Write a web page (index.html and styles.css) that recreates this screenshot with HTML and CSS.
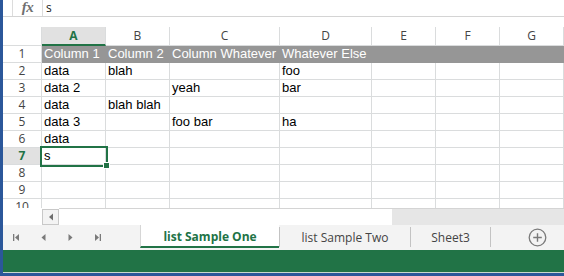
FILE: index.html
```html
<!DOCTYPE html>
<html>
<head>
<meta charset="utf-8">
<link rel="stylesheet" href="styles.css">
</head>
<body>
<div class="window">
  <div class="formula">
    <div class="fx-gap"></div>
    <div class="fx"><i>fx</i></div>
    <div class="finput">s</div>
  </div>
  <div class="spacer"></div>
  <div class="grid">
    <div class="corner"></div>
    <div class="ch sel">A</div>
    <div class="ch">B</div>
    <div class="ch">C</div>
    <div class="ch">D</div>
    <div class="ch">E</div>
    <div class="ch">F</div>
    <div class="ch">G</div>

    <div class="rh">1</div>
    <div class="c hd">Column 1</div>
    <div class="c hd">Column 2</div>
    <div class="c hd">Column Whatever</div>
    <div class="c hd">Whatever Else</div>
    <div class="c hd"></div>
    <div class="c hd"></div>
    <div class="c hd"></div>

    <div class="rh">2</div>
    <div class="c">data</div>
    <div class="c">blah</div>
    <div class="c"></div>
    <div class="c">foo</div>
    <div class="c"></div>
    <div class="c"></div>
    <div class="c"></div>

    <div class="rh">3</div>
    <div class="c">data 2</div>
    <div class="c"></div>
    <div class="c">yeah</div>
    <div class="c">bar</div>
    <div class="c"></div>
    <div class="c"></div>
    <div class="c"></div>

    <div class="rh">4</div>
    <div class="c">data</div>
    <div class="c">blah blah</div>
    <div class="c"></div>
    <div class="c"></div>
    <div class="c"></div>
    <div class="c"></div>
    <div class="c"></div>

    <div class="rh">5</div>
    <div class="c">data 3</div>
    <div class="c"></div>
    <div class="c">foo bar</div>
    <div class="c">ha</div>
    <div class="c"></div>
    <div class="c"></div>
    <div class="c"></div>

    <div class="rh">6</div>
    <div class="c">data</div>
    <div class="c"></div>
    <div class="c"></div>
    <div class="c"></div>
    <div class="c"></div>
    <div class="c"></div>
    <div class="c"></div>

    <div class="rh sel">7</div>
    <div class="c cur">s</div>
    <div class="c"></div>
    <div class="c"></div>
    <div class="c"></div>
    <div class="c"></div>
    <div class="c"></div>
    <div class="c"></div>

    <div class="rh">8</div>
    <div class="c"></div>
    <div class="c"></div>
    <div class="c"></div>
    <div class="c"></div>
    <div class="c"></div>
    <div class="c"></div>
    <div class="c"></div>

    <div class="rh">9</div>
    <div class="c"></div>
    <div class="c"></div>
    <div class="c"></div>
    <div class="c"></div>
    <div class="c"></div>
    <div class="c"></div>
    <div class="c"></div>

    <div class="rh last">10</div>
    <div class="c last"></div>
    <div class="c last"></div>
    <div class="c last"></div>
    <div class="c last"></div>
    <div class="c last"></div>
    <div class="c last"></div>
    <div class="c last"></div>
  </div>
  <div class="hscroll">
    <div class="hs-left"></div>
    <div class="hs-arrow"><svg width="6" height="8" viewBox="0 0 6 8"><path d="M5 0.5 L1 4 L5 7.5 Z" fill="#6d6d6d"/></svg></div>
    <div class="hs-thumb"></div>
    <div class="hs-track"></div>
  </div>
  <div class="tabs">
    <div class="nav">
      <div class="nbtn"><svg width="7" height="7" viewBox="0 0 7 7"><rect x="0" y="0" width="1.3" height="7" fill="#7a7a7a"/><path d="M6 0 L2 3.5 L6 7 Z" fill="#7a7a7a"/></svg></div>
      <div class="nbtn"><svg width="5" height="7" viewBox="0 0 5 7"><path d="M4.5 0 L0.5 3.5 L4.5 7 Z" fill="#7a7a7a"/></svg></div>
      <div class="nbtn"><svg width="5" height="7" viewBox="0 0 5 7"><path d="M0.5 0 L4.5 3.5 L0.5 7 Z" fill="#7a7a7a"/></svg></div>
      <div class="nbtn"><svg width="7" height="7" viewBox="0 0 7 7"><path d="M1 0 L5 3.5 L1 7 Z" fill="#7a7a7a"/><rect x="5.7" y="0" width="1.3" height="7" fill="#7a7a7a"/></svg></div>
    </div>
    <div class="tab active">list Sample One</div>
    <div class="sep"></div>
    <div class="tab t2">list Sample Two</div>
    <div class="sep"></div>
    <div class="tab t3">Sheet3</div>
    <div class="sep"></div>
    <div class="addwrap">
      <svg class="add" width="19" height="19" viewBox="0 0 19 19"><circle cx="9.5" cy="9.5" r="8.3" fill="none" stroke="#7a7a7a" stroke-width="1.3"/><path d="M9.5 5.2 V13.8 M5.2 9.5 H13.8" stroke="#7a7a7a" stroke-width="1.4"/></svg>
    </div>
  </div>
  <div class="status"></div>
</div>
</body>
</html>
```

FILE: styles.css
```css
html, body {
  margin: 0;
  padding: 0;
}
body {
  width: 564px;
  height: 276px;
  overflow: hidden;
  background: #ffffff;
  font-family: "Liberation Sans", Arial, sans-serif;
}
.window {
  width: 564px;
  height: 276px;
  box-sizing: border-box;
  border-left: 3px solid #2b579a;
  border-bottom: 3px solid #2b579a;
  display: flex;
  flex-direction: column;
  overflow: hidden;
}
.formula {
  display: flex;
  height: 17px;
  flex: none;
  box-sizing: border-box;
  border-bottom: 1px solid #d4d4d4;
}
.fx-gap {
  width: 9px;
}
.fx {
  width: 31px;
  box-sizing: border-box;
  border-left: 1px solid #dcdcdc;
  border-right: 1px solid #dcdcdc;
  text-align: center;
  font-family: "Liberation Serif", "Times New Roman", serif;
  font-size: 15px;
  font-weight: 700;
  line-height: 15px;
  color: #707070;
}
.fx i {
  letter-spacing: -0.5px;
}
.finput {
  flex: 1;
  padding-left: 3px;
  font-family: "Open Sans", "Noto Sans", sans-serif;
  font-size: 12px;
  line-height: 15px;
  color: #222;
}
.spacer {
  height: 10px;
  flex: none;
}
.grid {
  flex: none;
  display: grid;
  grid-template-columns: 39px 64px 64px 110px 92px 64px 64px 64px;
  grid-template-rows: 19px repeat(9, 17px) 9px;
  overflow: hidden;
}
.grid > div {
  box-sizing: border-box;
  border-right: 1px solid #dadcdd;
  border-bottom: 1px solid #dadcdd;
  white-space: nowrap;
}
.corner {
  background: #fff;
}
.ch {
  font-family: "Open Sans", "Noto Sans", sans-serif;
  font-size: 12px;
  line-height: 18px;
  text-align: center;
  color: #444;
  background: #fff;
}
.ch.sel {
  background: #e1e1e1;
  color: #217346;
  font-weight: 700;
  border-bottom: 2px solid #217346;
  line-height: 17px;
}
.rh {
  font-family: "Open Sans", "Noto Sans", sans-serif;
  font-size: 12px;
  line-height: 16px;
  text-align: center;
  color: #444;
  background: #fff;
  overflow: hidden;
}
.rh.sel {
  background: #e1e1e1;
  color: #217346;
  font-weight: 700;
}
.c {
  font-size: 13px;
  line-height: 16px;
  padding: 0 2px;
  color: #000;
}
.c.hd {
  background: #969696;
  color: #fff;
  border-right-color: #969696;
  border-bottom-color: #969696;
}
.grid > .last {
  border-bottom: none;
}
.c.cur {
  position: relative;
  z-index: 2;
  outline: 2px solid #217346;
  outline-offset: 0;
}
.c.cur::after {
  content: "";
  position: absolute;
  right: -5px;
  bottom: -5px;
  width: 5px;
  height: 5px;
  background: #217346;
  border: 1px solid #fff;
}
.hscroll {
  flex: none;
  height: 17px;
  display: flex;
  box-sizing: border-box;
}
.hs-left {
  width: 39px;
  background: #fff;
}
.hs-arrow {
  width: 17px;
  box-sizing: border-box;
  margin-top: 1px;
  background: #f3f3f3;
  border: 1px solid #c8c8c8;
  display: flex;
  align-items: center;
  justify-content: center;
}
.hs-thumb {
  width: 333px;
  background: #fff;
  border-top: 1px solid #d4d4d4;
}
.hs-track {
  flex: 1;
  background: #e6e6e6;
  border-top: 1px solid #d4d4d4;
}
.tabs {
  flex: none;
  height: 25px;
  display: flex;
  align-items: stretch;
  background: #f3f3f3;
  font-family: "Open Sans", "Noto Sans", sans-serif;
  font-size: 12px;
  color: #444;
}
.nav {
  width: 137px;
  display: flex;
  align-items: center;
}
.nbtn {
  width: 27px;
  display: flex;
  justify-content: center;
  align-items: center;
}
.tab {
  display: flex;
  align-items: center;
  justify-content: center;
  white-space: nowrap;
}
.tab.active {
  width: 139px;
  box-sizing: border-box;
  background: #fff;
  border-left: 1px solid #d6d6d6;
  border-bottom: 2px solid #217346;
  margin-bottom: 2px;
  color: #217346;
  font-weight: 700;
  padding-top: 1px;
}
.tab.t2 {
  width: 130px;
}
.tab.t3 {
  width: 79px;
}
.sep {
  width: 1px;
  background: #c3c3c3;
  margin: 2px 0 3px;
}
.addwrap {
  flex: 1;
  display: flex;
  align-items: center;
  padding-left: 37px;
}
.status {
  flex: none;
  height: 23px;
  box-sizing: border-box;
  background: #217346;
  border-bottom: 1px solid #c9d9cf;
}
```
